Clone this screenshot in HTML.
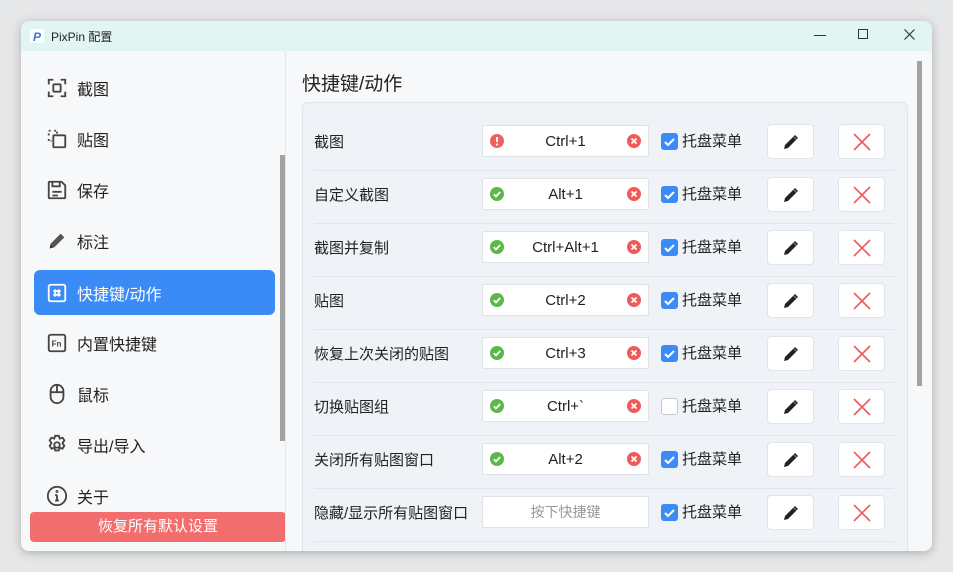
<!DOCTYPE html>
<html><head><meta charset="utf-8"><style>
*{margin:0;padding:0;box-sizing:border-box}
body{width:953px;height:572px;background:#e6e7e8;font-family:"Liberation Sans","Noto Sans CJK SC",sans-serif;position:relative;overflow:hidden;color:#222}
.win{position:absolute;left:21px;top:21px;width:911px;height:530px;background:#f7f8fa;border-radius:8px;box-shadow:0 2px 10px rgba(0,0,0,.25);overflow:hidden}
.tb{height:30px;background:#e1f6f3;position:relative;font-size:12px}
.tb .t{position:absolute;left:30px;top:7px}
.side{position:absolute;left:0;top:30px;width:264px;height:500px}
.item{position:absolute;left:13px;width:241px;height:45px;border-radius:6px;font-size:16px;display:flex;align-items:center;padding-left:12px}
.item svg{width:22px;height:22px;margin-right:9px}
.act{background:#3a8bf6;color:#fff}
.reset{position:absolute;left:9px;top:461px;width:256px;height:30px;background:#f26d6d;border-radius:4px;font-size:15px;text-align:center;line-height:30px;color:#fff}
.sb1{position:absolute;left:259px;top:134px;width:6px;height:286px;background:#a3a3a3}
.div{position:absolute;left:264px;top:30px;width:1px;height:500px;background:#e4e6ea}
.sb2{position:absolute;left:896px;top:40px;width:5px;height:325px;background:#a3a3a3}
h1{position:absolute;left:281px;top:52px;font-size:19px;font-weight:normal;line-height:24px}
.panel{position:absolute;left:281px;top:81px;width:606px;height:460px;background:#eff2f6;border:1px solid #e1e4e8;border-radius:6px}
.row{position:absolute;left:11px;width:580px;height:53px;border-bottom:1px solid #e1e4e8}
.lbl{position:absolute;left:0;top:15px;font-size:15px;line-height:20px}
.inp{position:absolute;left:168px;top:7px;width:167px;height:32px;background:#fff;border:1px solid #dfe2e6;border-radius:2px;font-size:15px;display:flex;align-items:center;justify-content:center}
.ic{position:absolute;top:8px;width:14px;height:14px}
.l{left:7px}.r{right:7px}
.cb{position:absolute;left:347px;top:15px;width:17px;height:17px;border-radius:3px;background:#3a8bf6}
.cb.off{background:#fff;border:1px solid #c8c8c8}
.tray{position:absolute;left:368px;top:14px;font-size:15px;line-height:20px}
.btn{position:absolute;top:6px;width:47px;height:35px;background:#fff;border:1px solid #e1e4e8;border-radius:4px}
.btn svg{position:absolute;left:13px;top:7px}
</style></head><body>
<svg width="0" height="0" style="position:absolute"><defs>
<symbol id="ok" viewBox="0 0 14 14"><circle cx="7" cy="7" r="7" fill="#5cb84a"/><path d="M3.8 7.2l2.2 2.2 4.2-4.4" stroke="#fff" stroke-width="1.8" fill="none"/></symbol>
<symbol id="er" viewBox="0 0 14 14"><circle cx="7" cy="7" r="7" fill="#ef6060"/><path d="M7 3v5" stroke="#fff" stroke-width="2"/><circle cx="7" cy="10.5" r="1.1" fill="#fff"/></symbol>
<symbol id="xx" viewBox="0 0 14 14"><circle cx="7" cy="7" r="7" fill="#ef5a5a"/><path d="M4.5 4.5l5 5M9.5 4.5l-5 5" stroke="#fff" stroke-width="1.8"/></symbol>
<symbol id="ck" viewBox="0 0 17 17"><path d="M4 9l3 3 6-6" stroke="#fff" stroke-width="2" fill="none"/></symbol>
<symbol id="pen" viewBox="0 0 20 20"><path d="M3 17l1-4L14 3l3 3L7 16z" fill="#222"/><path d="M12.5 4.5l3 3" stroke="#888" stroke-width="1"/></symbol>
<symbol id="del" viewBox="0 0 20 20"><path d="M2 2L18 18M18 2L2 18" stroke="#ef5a5a" stroke-width="1.6"/></symbol>
</defs></svg>
<div class="win">
<div class="tb">
<svg style="position:absolute;left:8px;top:7px" width="16" height="16"><rect x="1" y="1" width="14" height="14" rx="3" fill="#fff"/><text x="4" y="13" font-size="12" font-weight="bold" fill="#3a7bd5" font-family="Liberation Sans" font-style="italic">P</text></svg>
<span class="t">PixPin 配置</span>
<div style="position:absolute;left:793px;top:14px;width:12px;height:1px;background:#333"></div>
<div style="position:absolute;left:837px;top:8px;width:10px;height:10px;border:1px solid #333"></div>
<svg style="position:absolute;left:883px;top:8px" width="11" height="11"><path d="M.5 .5l10 10M10.5 .5l-10 10" stroke="#333" stroke-width="1.2"/></svg>
</div>
<div class="side">
<div class="item" style="top:14px"><svg viewBox="0 0 24 24" fill="none" stroke="#444" stroke-width="2"><path d="M3 8V3h5M16 3h5v5M21 16v5h-5M8 21H3v-5"/><rect x="8" y="8" width="8" height="8" rx="1"/></svg>截图</div>
<div class="item" style="top:65px"><svg viewBox="0 0 24 24" fill="none" stroke="#444" stroke-width="2"><path d="M3 3h3M9 3h3v3M3 6v3M3 12v2h3" stroke-dasharray="2 2"/><rect x="8" y="8" width="13" height="13" rx="1"/></svg>贴图</div>
<div class="item" style="top:116px"><svg viewBox="0 0 24 24" fill="none" stroke="#444" stroke-width="2"><path d="M3 4a1 1 0 0 1 1-1h13l4 4v13a1 1 0 0 1-1 1H4a1 1 0 0 1-1-1z"/><path d="M7 3v5h8V3M7 14h10M7 18h6"/></svg>保存</div>
<div class="item" style="top:167px"><svg viewBox="0 0 24 24"><path d="M4 20l1-5L16 4l4 4L9 19z" fill="#555"/><path d="M4 20l1-4 3 3z" fill="#333"/></svg>标注</div>
<div class="item act" style="top:219px"><svg viewBox="0 0 24 24" fill="none" stroke="#fff" stroke-width="2"><rect x="3" y="3" width="18" height="18" rx="2"/><path d="M10 8v8M14 8v8M8 10h8M8 14h8"/></svg>快捷键/动作</div>
<div class="item" style="top:269px"><svg viewBox="0 0 24 24" fill="none" stroke="#444" stroke-width="2"><rect x="3" y="3" width="18" height="18" rx="2"/><text x="6" y="16" font-size="9" fill="#444" stroke="none" font-weight="bold" font-family="Liberation Sans">Fn</text></svg>内置快捷键</div>
<div class="item" style="top:320px"><svg viewBox="0 0 24 24" fill="none" stroke="#444" stroke-width="2"><rect x="5" y="2" width="14" height="20" rx="7"/><path d="M5 10h14M12 2v8"/></svg>鼠标</div>
<div class="item" style="top:371px"><svg viewBox="0 0 24 24" fill="none" stroke="#444" stroke-width="2"><circle cx="12" cy="12" r="3"/><path d="M10 2h4l1 3 3-1 2 3-2 3 2 3-2 3-3-1-1 3h-4l-1-3-3 1-2-3 2-3-2-3 2-3 3 1z"/></svg>导出/导入</div>
<div class="item" style="top:422px"><svg viewBox="0 0 24 24" fill="none" stroke="#444" stroke-width="2"><circle cx="12" cy="12" r="10"/><path d="M12 11v6M10 17h4M10 11h2"/><circle cx="12" cy="7" r=".6"/></svg>关于</div>
<div class="reset">恢复所有默认设置</div>
</div>
<div class="sb1"></div><div class="div"></div><div class="sb2"></div>
<h1>快捷键/动作</h1>
<div class="panel">
<div class="row" style="top:15px"><span class="lbl">截图</span><div class="inp"><svg class="ic l"><use href="#er"/></svg>Ctrl+1<svg class="ic r"><use href="#xx"/></svg></div><svg class="cb"><use href="#ck"/></svg><span class="tray">托盘菜单</span><div class="btn" style="left:453px"><svg width="20" height="20"><use href="#pen"/></svg></div><div class="btn" style="left:524px"><svg width="20" height="20"><use href="#del"/></svg></div></div>
<div class="row" style="top:68px"><span class="lbl">自定义截图</span><div class="inp"><svg class="ic l"><use href="#ok"/></svg>Alt+1<svg class="ic r"><use href="#xx"/></svg></div><svg class="cb"><use href="#ck"/></svg><span class="tray">托盘菜单</span><div class="btn" style="left:453px"><svg width="20" height="20"><use href="#pen"/></svg></div><div class="btn" style="left:524px"><svg width="20" height="20"><use href="#del"/></svg></div></div>
<div class="row" style="top:121px"><span class="lbl">截图并复制</span><div class="inp"><svg class="ic l"><use href="#ok"/></svg>Ctrl+Alt+1<svg class="ic r"><use href="#xx"/></svg></div><svg class="cb"><use href="#ck"/></svg><span class="tray">托盘菜单</span><div class="btn" style="left:453px"><svg width="20" height="20"><use href="#pen"/></svg></div><div class="btn" style="left:524px"><svg width="20" height="20"><use href="#del"/></svg></div></div>
<div class="row" style="top:174px"><span class="lbl">贴图</span><div class="inp"><svg class="ic l"><use href="#ok"/></svg>Ctrl+2<svg class="ic r"><use href="#xx"/></svg></div><svg class="cb"><use href="#ck"/></svg><span class="tray">托盘菜单</span><div class="btn" style="left:453px"><svg width="20" height="20"><use href="#pen"/></svg></div><div class="btn" style="left:524px"><svg width="20" height="20"><use href="#del"/></svg></div></div>
<div class="row" style="top:227px"><span class="lbl">恢复上次关闭的贴图</span><div class="inp"><svg class="ic l"><use href="#ok"/></svg>Ctrl+3<svg class="ic r"><use href="#xx"/></svg></div><svg class="cb"><use href="#ck"/></svg><span class="tray">托盘菜单</span><div class="btn" style="left:453px"><svg width="20" height="20"><use href="#pen"/></svg></div><div class="btn" style="left:524px"><svg width="20" height="20"><use href="#del"/></svg></div></div>
<div class="row" style="top:280px"><span class="lbl">切换贴图组</span><div class="inp"><svg class="ic l"><use href="#ok"/></svg>Ctrl+`<svg class="ic r"><use href="#xx"/></svg></div><div class="cb off"></div><span class="tray">托盘菜单</span><div class="btn" style="left:453px"><svg width="20" height="20"><use href="#pen"/></svg></div><div class="btn" style="left:524px"><svg width="20" height="20"><use href="#del"/></svg></div></div>
<div class="row" style="top:333px"><span class="lbl">关闭所有贴图窗口</span><div class="inp"><svg class="ic l"><use href="#ok"/></svg>Alt+2<svg class="ic r"><use href="#xx"/></svg></div><svg class="cb"><use href="#ck"/></svg><span class="tray">托盘菜单</span><div class="btn" style="left:453px"><svg width="20" height="20"><use href="#pen"/></svg></div><div class="btn" style="left:524px"><svg width="20" height="20"><use href="#del"/></svg></div></div>
<div class="row" style="top:386px"><span class="lbl">隐藏/显示所有贴图窗口</span><div class="inp" style="color:#999;font-size:14px">按下快捷键</div><svg class="cb"><use href="#ck"/></svg><span class="tray">托盘菜单</span><div class="btn" style="left:453px"><svg width="20" height="20"><use href="#pen"/></svg></div><div class="btn" style="left:524px"><svg width="20" height="20"><use href="#del"/></svg></div></div>
</div>
</div>
</body></html>
